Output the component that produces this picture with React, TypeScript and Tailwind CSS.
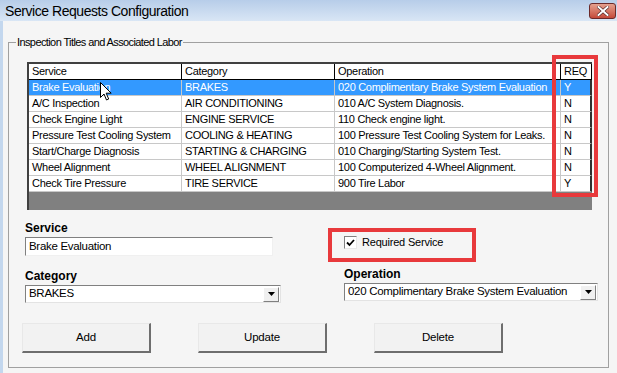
import React from 'react';

type Row = { service: string; category: string; operation: string; req: string };

const rows: Row[] = [
  { service: 'Brake Evaluation', category: 'BRAKES', operation: '020 Complimentary Brake System Evaluation', req: 'Y' },
  { service: 'A/C Inspection', category: 'AIR CONDITIONING', operation: '010 A/C System Diagnosis.', req: 'N' },
  { service: 'Check Engine Light', category: 'ENGINE SERVICE', operation: '110 Check engine light.', req: 'N' },
  { service: 'Pressure Test Cooling System', category: 'COOLING & HEATING', operation: '100 Pressure Test Cooling System for Leaks.', req: 'N' },
  { service: 'Start/Charge Diagnosis', category: 'STARTING & CHARGING', operation: '010 Charging/Starting System Test.', req: 'N' },
  { service: 'Wheel Alignment', category: 'WHEEL ALIGNMENT', operation: '100 Computerized 4-Wheel Alignment.', req: 'N' },
  { service: 'Check Tire Pressure', category: 'TIRE SERVICE', operation: '900 Tire Labor', req: 'Y' },
];

const cols = 'grid grid-cols-[153px_153px_226px_31px]';
const cellText = 'pl-[3px] text-[11px] leading-[15px] tracking-[-0.3px] whitespace-nowrap overflow-hidden';

const DropArrow: React.FC = () => (
  <div className="w-[16px] h-[15px] mr-px bg-[#f0f0f0] border border-t-white border-l-white border-r-[#808080] border-b-[#808080] flex items-center justify-center">
    <svg width="7" height="4" viewBox="0 0 7 4">
      <path d="M0 0h7L3.5 4z" fill="#000" />
    </svg>
  </div>
);

const Combo: React.FC<{ value: string; width: string }> = ({ value, width }) => (
  <div className={`${width} h-[18px] bg-white border border-t-[#808080] border-l-[#808080] border-r-[#e3e3e3] border-b-[#e3e3e3] flex items-center justify-between`}>
    <span className="pl-[3px] text-[11.5px] leading-none tracking-[-0.3px] whitespace-nowrap text-black">{value}</span>
    <DropArrow />
  </div>
);

const Button: React.FC<{ label: string }> = ({ label }) => (
  <button className="w-[129px] h-[30px] bg-[#f2f2f2] border border-t-[#e8e8e8] border-l-[#e8e8e8] border-r-2 border-b-2 border-r-[#6e6e6e] border-b-[#6e6e6e] text-[11.5px] tracking-[-0.2px] text-black">
    {label}
  </button>
);

export default function App() {
  return (
    <div className="w-[617px] h-[373px] overflow-hidden bg-[#f5f5f5] font-['Liberation_Sans',Arial,sans-serif] text-black">
      {/* title bar */}
      <div className="h-[21px] bg-linear-to-b from-[#b7cde9] to-[#d9e6f5] flex items-center justify-between pl-[5px] pr-px">
        <span className="text-[14px] leading-none tracking-[-0.45px] text-black">Service Requests Configuration</span>
        <div className="w-[27px] h-[16px] rounded-[3px] border border-[#6b2a2a] bg-linear-to-b from-[#e4a08f] to-[#c4493a] flex items-center justify-center">
          <svg width="12" height="10" viewBox="0 0 12 10">
            <path d="M1.5 1l9 8M10.5 1l-9 8" stroke="#4a2020" strokeWidth="3.2" strokeLinecap="square" />
            <path d="M1.5 1l9 8M10.5 1l-9 8" stroke="#fff" strokeWidth="2" strokeLinecap="square" />
          </svg>
        </div>
      </div>

      <div className="flex h-[352px]">
        <div className="w-[3px] bg-[#c3d7ee]" />
        <div className="flex-1 pl-[5px] pt-[21px]">
          {/* group box */}
          <div className="relative w-[601px] h-[326px] border border-[#a0a0a0] pt-[19px] pl-[18px]">
            <span className="absolute -top-[8px] left-[7px] px-px bg-[#f5f5f5] text-[11px] leading-[14px] tracking-[-0.6px] font-['Liberation_Sans_Narrow','Liberation_Sans',Arial,sans-serif]">
              Inspection Titles and Associated Labor
            </span>

            {/* data grid */}
            <div className="relative w-[565px] h-[148px] bg-[#808080] border-l-2 border-t-2 border-l-[#404040] border-t-[#404040]">
              <div className={`${cols} h-[16px] bg-white border-b border-black`}>
                {['Service', 'Category', 'Operation', 'REQ'].map((h) => (
                  <div key={h} className={`border-r border-black ${cellText}`}>
                    {h}
                  </div>
                ))}
              </div>
              {rows.map((r, i) => {
                const sel = i === 0;
                const cell = sel
                  ? 'bg-[#3399ff] text-white border-r border-b border-[#c8c8c8]'
                  : 'bg-white text-black border-r border-b border-[#c8c8c8]';
                return (
                  <div key={r.service} className={`${cols} h-[16px]`}>
                    <div className={`${cell} ${cellText}`}>{r.service}</div>
                    <div className={`${cell} ${cellText}`}>{r.category}</div>
                    <div className={`${cell} ${cellText}`}>{r.operation}</div>
                    <div className={`${sel ? 'bg-[#3399ff] text-white' : 'bg-white text-black'} border-r-2 border-r-[#303030] border-b border-b-[#c8c8c8] ${cellText}`}>{r.req}</div>
                  </div>
                );
              })}

              {/* mouse pointer */}
              <svg className="absolute left-[71px] top-[18px]" width="12" height="19" viewBox="0 0 12 19">
                <path d="M0.5 0.5v15l3.5-3.5 2.5 6 2.2-1-2.5-5.8h5z" fill="#fff" stroke="#000" strokeWidth="1" strokeLinejoin="round" />
              </svg>

              {/* red annotation around REQ */}
              <div className="absolute -top-[9px] left-[523px] w-[46px] h-[142px] border-4 border-[#e8393c]" />
            </div>

            {/* form area */}
            <div className="flex mt-[11px] -ml-[2px]">
              <div className="w-[319px]">
                <div className="text-[12px] font-bold leading-[14px]">Service</div>
                <div className="mt-[2px] w-[248px] h-[19px] bg-white border border-t-[#808080] border-l-[#808080] border-r-[#f0f0f0] border-b-[#f0f0f0] flex items-center">
                  <span className="pl-[3px] text-[11.5px] leading-none tracking-[-0.3px]">Brake Evaluation</span>
                </div>
                <div className="mt-[13px] text-[12px] font-bold leading-[14px]">Category</div>
                <div className="mt-[2px]">
                  <Combo value="BRAKES" width="w-[256px]" />
                </div>
              </div>

              <div className="relative">
                <div className="relative h-[34px] -ml-[16px] w-[148px] border-4 border-[#e8393c] mt-[7px] flex items-start pl-[12px] pt-[4px]">
                  <div className="w-[13px] h-[13px] bg-white border border-t-[#808080] border-l-[#808080] border-r-[#e8e8e8] border-b-[#e8e8e8] flex items-center justify-center">
                    <svg width="9" height="8" viewBox="0 0 9 8">
                      <path d="M1 3.5l2.5 2.5 4.5-5" stroke="#000" strokeWidth="1.8" fill="none" />
                    </svg>
                  </div>
                  <span className="ml-[5px] text-[11px] leading-[13px] tracking-[-0.2px]">Required Service</span>
                </div>
                <div className="mt-[5px] text-[12px] font-bold leading-[14px]">Operation</div>
                <div className="mt-[2px]">
                  <Combo value="020 Complimentary Brake System Evaluation" width="w-[254px]" />
                </div>
              </div>
            </div>

            {/* buttons */}
            <div className="flex gap-[47px] mt-[20px] -ml-[5px]">
              <Button label="Add" />
              <Button label="Update" />
              <Button label="Delete" />
            </div>
          </div>
        </div>
      </div>
    </div>
  );
}
